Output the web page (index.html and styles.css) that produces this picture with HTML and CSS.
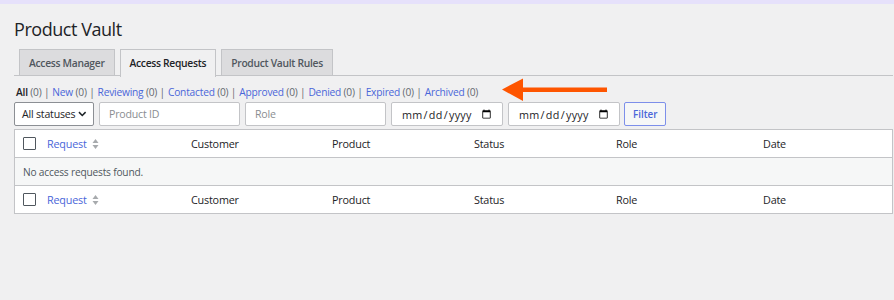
FILE: index.html
```html
<!DOCTYPE html>
<html>
    <head>
        <link rel="stylesheet" href="styles.css">
    </head>
    <body>
        <div class="admin-bar"></div>
        <div class="wrap">
            <h1>Product Vault</h1>
            <nav class="nav-tabs">
                <a class="nav-tab">Access Manager</a>
                <a class="nav-tab active">Access Requests</a>
                <a class="nav-tab">Product Vault Rules</a>
            </nav>
            <ul class="subsubsub">
                <li><a class="current">All</a> <span class="count">(0)</span> |</li>
                <li><a>New</a> <span class="count">(0)</span> |</li>
                <li><a>Reviewing</a> <span class="count">(0)</span> |</li>
                <li><a>Contacted</a> <span class="count">(0)</span> |</li>
                <li><a>Approved</a> <span class="count">(0)</span> |</li>
                <li><a>Denied</a> <span class="count">(0)</span> |</li>
                <li><a>Expired</a> <span class="count">(0)</span> |</li>
                <li><a>Archived</a> <span class="count">(0)</span></li>
            </ul>
            <form class="filters">
                <div class="select">
                    <span>All statuses</span>
                    <svg width="9" height="6" viewBox="0 0 9 6"><path d="M1 1l3.5 3.5L8 1" fill="none" stroke="#1d2327" stroke-width="1.6"/></svg>
                </div>
                <input class="text-input" type="text" placeholder="Product ID">
                <input class="text-input" type="text" placeholder="Role">
                <input class="date-input" type="date">
                <input class="date-input" type="date">
                <button type="button" class="button">Filter</button>
            </form>
            <div class="list-table">
                <div class="row head">
                    <div class="cell cb"><span class="checkbox"></span></div>
                    <div class="cell"><a>Request</a>
                        <svg class="sort" width="7" height="12" viewBox="0 0 7 12"><path d="M3.5 1L6.5 5H0.5z M3.5 11L0.5 7H6.5z" fill="#a7aaad"/></svg>
                    </div>
                    <div class="cell">Customer</div>
                    <div class="cell">Product</div>
                    <div class="cell">Status</div>
                    <div class="cell">Role</div>
                    <div class="cell">Date</div>
                </div>
                <div class="row empty">
                    <div class="cell">No access requests found.</div>
                </div>
                <div class="row head foot">
                    <div class="cell cb"><span class="checkbox"></span></div>
                    <div class="cell"><a>Request</a>
                        <svg class="sort" width="7" height="12" viewBox="0 0 7 12"><path d="M3.5 1L6.5 5H0.5z M3.5 11L0.5 7H6.5z" fill="#a7aaad"/></svg>
                    </div>
                    <div class="cell">Customer</div>
                    <div class="cell">Product</div>
                    <div class="cell">Status</div>
                    <div class="cell">Role</div>
                    <div class="cell">Date</div>
                </div>
            </div>
            <svg class="callout" width="106" height="24" viewBox="0 0 106 24"><path d="M0 11.5L21 0.5V9.5H105V14H21V23z" fill="#fe5500"/></svg>
        </div>
    </body>
</html>
```

FILE: styles.css
```css
body{
    margin: 0;
    background-color: #f0f0f1;
    color: #1d2327;
    font-family: "Open Sans", "Noto Sans", sans-serif;
    font-size: 10px;
}

.admin-bar{
    height: 4px;
    background-color: #e6e1fb;
}

.wrap{
    position: relative;
    padding: 0 1px 0 14px;
}

h1{
    margin: 0;
    padding: 12px 0 0;
    font-size: 18px;
    font-weight: 400;
    letter-spacing: -0.45px;
    line-height: 26px;
    color: #1d2327;
}

.nav-tabs{
    display: flex;
    gap: 5px;
    margin-top: 6px;
    padding-left: 5px;
    border-bottom: 1px solid #c3c4c7;
    height: 27px;
}

.nav-tab{
    display: block;
    height: 26px;
    padding: 0 9px;
    line-height: 26px;
    font-size: 10.3px;
    letter-spacing: -0.3px;
    font-weight: 600;
    color: #50575e;
    background-color: #dcdcde;
    border: 1px solid #c3c4c7;
    border-bottom: none;
    box-sizing: border-box;
    margin-top: 1px;
}

.nav-tab.active{
    height: 28px;
    color: #1d2327;
    background-color: #f0f0f1;
}

.subsubsub{
    display: flex;
    gap: 3px;
    list-style: none;
    margin: 9px 0 0 2px;
    padding: 0;
    font-size: 10.2px;
    letter-spacing: -0.2px;
    line-height: 14px;
    color: #646970;
}

.subsubsub a{
    color: #4a66d9;
}

.subsubsub a.current{
    color: #1d2327;
    font-weight: 600;
}

.count{
    color: #646970;
}

.filters{
    display: flex;
    gap: 5px;
    margin: 3px 0 3px;
    height: 24px;
}

.select, .text-input, .date-input{
    box-sizing: border-box;
    height: 24px;
    border: 1px solid #c3c4c7;
    border-radius: 2px;
    background-color: #fff;
    font-family: inherit;
    font-size: 10.6px;
    letter-spacing: -0.2px;
    color: #1d2327;
}

.select{
    display: flex;
    align-items: center;
    gap: 3px;
    width: 80px;
    padding: 0 6px 0 7px;
    white-space: nowrap;
    border-color: #8c8f94;
}

.text-input{
    width: 141px;
    padding: 0 9px;
}

.text-input::placeholder{
    color: #8a8d91;
}

.date-input{
    width: 112px;
    padding: 0 8px 0 9px;
    font-size: 10.8px;
    letter-spacing: 0.3px;
}

.button{
    height: 24px;
    margin-left: -1px;
    padding: 0 8px;
    font-family: inherit;
    font-size: 9.8px;
    font-weight: 600;
    color: #4a66d9;
    background-color: #f6f7f7;
    border: 1px solid #7d8fea;
    border-radius: 2px;
}

.list-table{
    background-color: #fff;
    border: 1px solid #c3c4c7;
    box-shadow: 0 1px 1px rgba(0, 0, 0, 0.04);
}

.row{
    display: grid;
    grid-template-columns: 24px 144px 141px 142px 142px 147px 1fr;
    height: 27px;
    align-items: center;
}

.head{
    border-bottom: 1px solid #c3c4c7;
}

.foot{
    border-bottom: none;
}

.cell{
    padding: 0 8px;
    font-size: 10.8px;
    letter-spacing: -0.2px;
    display: flex;
    align-items: center;
    gap: 5px;
}

.cell a{
    color: #4a66d9;
}

.cell.cb{
    padding: 0 0 0 8px;
}

.checkbox{
    display: block;
    width: 13px;
    height: 13px;
    box-sizing: border-box;
    border: 1px solid #50575e;
    border-radius: 1px;
    background-color: #fff;
}

.empty{
    display: flex;
    background-color: #f6f7f7;
    border-bottom: 1px solid #c3c4c7;
    color: #50575e;
}

.empty .cell{
    font-size: 10.2px;
}

.callout{
    position: absolute;
    left: 502px;
    top: 74px;
}
```
